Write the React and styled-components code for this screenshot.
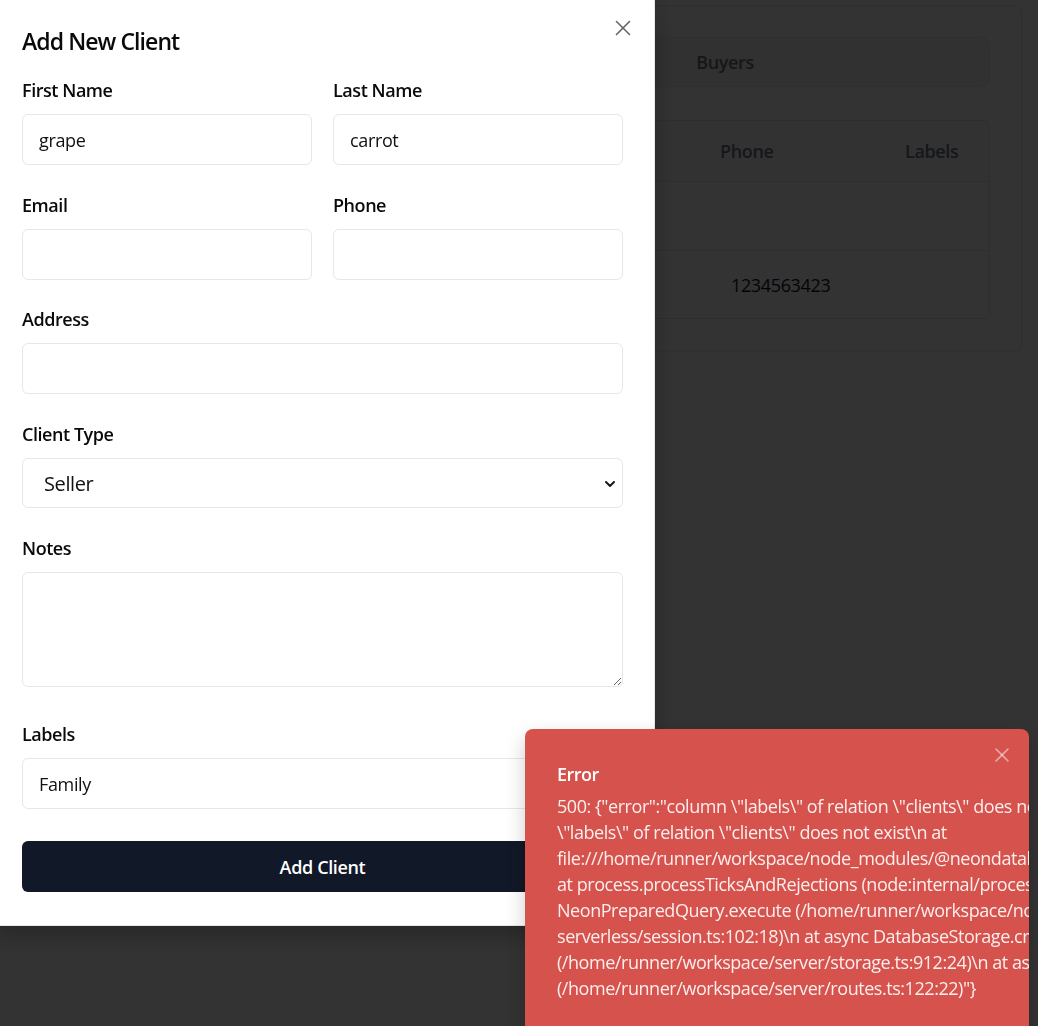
import React from 'react';
import styled, { createGlobalStyle } from 'styled-components';

const Global = createGlobalStyle`
  html, body { margin: 0; padding: 0; height: 100%; overflow: hidden; background: #ffffff; }
  body {
    font-family: "Open Sans", "Noto Sans", sans-serif;
    font-size: 18px;
    color: #0f0f0f;
    letter-spacing: -0.02em;
  }
  *, *::before, *::after { box-sizing: border-box; }
`;

/* ---------- background page ---------- */
const Page = styled.main`
  padding: 5px 16px 0 16px;
`;

const Card = styled.section`
  background: #ffffff;
  border: 1px solid #e5e7eb;
  border-radius: 8px;
  padding: 31px;
  display: flex;
  flex-direction: column;
  gap: 33px;
  box-shadow: 0 1px 3px rgba(0, 0, 0, 0.08);
`;

const TabList = styled.div`
  height: 50px;
  display: grid;
  grid-template-columns: 1fr 520px;
  background: #f4f4f5;
  border: 1px solid #ececee;
  border-radius: 8px;
  padding: 4px;
`;

const Tab = styled.div`
  display: flex;
  align-items: center;
  justify-content: center;
  border-radius: 6px;
  font-weight: 600;
  color: ${(p) => (p.$active ? '#111827' : '#6b7280')};
  background: ${(p) => (p.$active ? '#ffffff' : 'transparent')};
`;

const Table = styled.div`
  border: 1px solid #e5e7eb;
  border-radius: 6px;
  overflow: hidden;
`;

const Row = styled.div`
  display: grid;
  grid-template-columns: 1fr 1fr 185px 100px;
  align-items: center;
  height: ${(p) => p.$h}px;
  background: ${(p) => (p.$head ? '#f9fafb' : '#ffffff')};
  border-bottom: ${(p) => (p.$last ? 'none' : '1px solid #e5e7eb')};
`;

const HeadCell = styled.div`
  padding: 0 16px;
  font-weight: 600;
  color: #6b7280;
`;

const Cell = styled.div`
  padding: 0 27px;
  color: #111827;
  white-space: nowrap;
`;

const Overlay = styled.div`
  position: fixed;
  inset: 0;
  background: rgba(0, 0, 0, 0.8);
`;

/* ---------- dialog ---------- */
const Dialog = styled.div`
  position: fixed;
  left: -10px;
  top: -7px;
  width: 665px;
  background: #ffffff;
  border: 1px solid #e5e7eb;
  border-radius: 8px;
  padding: 31px 31px 33px 31px;
  box-shadow: 0 10px 25px rgba(0, 0, 0, 0.25);
`;

const Title = styled.h2`
  margin: 0;
  font-size: 23px;
  line-height: 32px;
  font-weight: 600;
  letter-spacing: -0.04em;
  color: #0a0a0a;
`;

const CloseButton = styled.button`
  position: absolute;
  right: 23px;
  top: 26px;
  width: 16px;
  height: 16px;
  padding: 0;
  border: none;
  background: transparent;
  display: flex;
  opacity: 0.75;
  color: #333;
`;

const Form = styled.form`
  margin-top: 20px;
  display: flex;
  flex-direction: column;
  gap: 27px;
`;

const TwoCols = styled.div`
  display: grid;
  grid-template-columns: 1fr 1fr;
  gap: 21px;
`;

const Field = styled.div`
  display: flex;
  flex-direction: column;
  gap: 10px;
  margin-top: ${(p) => p.$before || 0}px;
  margin-bottom: ${(p) => p.$after || 0}px;
`;

const Label = styled.label`
  font-size: 18px;
  line-height: 27px;
  font-weight: 600;
  letter-spacing: -0.025em;
  color: #0a0a0a;
`;

const Input = styled.input`
  height: 51px;
  width: 100%;
  border: 1px solid #e5e7eb;
  border-radius: 6px;
  padding: 0 16px;
  font: inherit;
  font-size: 18px;
  letter-spacing: -0.02em;
  color: #111111;
  background: #ffffff;
  outline: none;
`;

const SelectWrap = styled.div`
  position: relative;
`;

const Select = styled.select`
  appearance: none;
  -webkit-appearance: none;
  width: 100%;
  height: 50px;
  border: 1px solid #e5e7eb;
  border-radius: 6px;
  padding: 0 21px;
  font: inherit;
  font-size: 20px;
  letter-spacing: -0.02em;
  color: #111111;
  background: #ffffff;
  outline: none;
`;

const Chevron = styled.svg`
  position: absolute;
  right: 7px;
  top: 20px;
  pointer-events: none;
`;

const TextArea = styled.textarea`
  display: block;
  width: 100%;
  height: 115px;
  border: 1px solid #e5e7eb;
  border-radius: 6px;
  padding: 12px 16px;
  font: inherit;
  font-size: 18px;
  color: #111111;
  background: #ffffff;
  outline: none;
`;

const Submit = styled.button`
  margin-top: 5px;
  height: 51px;
  width: 100%;
  border: none;
  border-radius: 6px;
  background: #111827;
  color: #ffffff;
  font: inherit;
  font-size: 18px;
  font-weight: 600;
  letter-spacing: -0.02em;
`;

/* ---------- toast ---------- */
const Toast = styled.div`
  position: fixed;
  left: 525px;
  top: 729px;
  width: 504px;
  height: 320px;
  background: #d6524c;
  border-radius: 8px;
  padding: 32px 32px 0 32px;
  overflow: hidden;
  box-shadow: 0 8px 20px rgba(0, 0, 0, 0.2);
`;

const ToastTitle = styled.div`
  font-size: 18px;
  line-height: 26px;
  font-weight: 600;
  letter-spacing: -0.03em;
  color: #ffffff;
`;

const ToastBody = styled.div`
  margin-top: 6px;
  font-size: 18px;
  line-height: 26px;
  letter-spacing: -0.025em;
  color: rgba(255, 255, 255, 0.9);
`;

const ToastLine = styled.div`
  white-space: nowrap;
`;

const ToastClose = styled.button`
  position: absolute;
  right: 19px;
  top: 18px;
  width: 16px;
  height: 16px;
  padding: 0;
  border: none;
  background: transparent;
  display: flex;
  color: rgba(255, 255, 255, 0.5);
`;

const XIcon = ({ span = 13 }) => {
  const a = (16 - span) / 2;
  const b = 16 - a;
  return (
    <svg width="16" height="16" viewBox="0 0 16 16" fill="none" stroke="currentColor" strokeWidth="1.6" strokeLinecap="round">
      <path d={`M${b} ${a} L${a} ${b}`} />
      <path d={`M${a} ${a} L${b} ${b}`} />
    </svg>
  );
};

const errorLines = [
  '500: {"error":"column \\"labels\\" of relation \\"clients\\" does not exist","stack":"error: column',
  '\\"labels\\" of relation \\"clients\\" does not exist\\n at',
  'file:///home/runner/workspace/node_modules/@neondatabase/serverless/index.mjs:1345:74\\n',
  'at process.processTicksAndRejections (node:internal/process/task_queues:95:5)\\n at async',
  'NeonPreparedQuery.execute (/home/runner/workspace/node_modules/drizzle-orm/neon-',
  'serverless/session.ts:102:18)\\n at async DatabaseStorage.createClient',
  '(/home/runner/workspace/server/storage.ts:912:24)\\n at async',
  '(/home/runner/workspace/server/routes.ts:122:22)"}',
];

export default function App() {
  return (
    <>
      <Global />
      <Page>
        <Card>
          <TabList>
            <Tab $active>Sellers</Tab>
            <Tab>Buyers</Tab>
          </TabList>
          <Table>
            <Row $head $h={61}>
              <HeadCell>Name</HeadCell>
              <HeadCell>Email</HeadCell>
              <HeadCell>Phone</HeadCell>
              <HeadCell>Labels</HeadCell>
            </Row>
            <Row $h={69}>
              <Cell>apple banana</Cell>
              <Cell>apple@example.com</Cell>
              <Cell></Cell>
              <Cell></Cell>
            </Row>
            <Row $h={67} $last>
              <Cell>grape carrot</Cell>
              <Cell>grape@example.com</Cell>
              <Cell>1234563423</Cell>
              <Cell></Cell>
            </Row>
          </Table>
        </Card>
      </Page>

      <Overlay />

      <Dialog role="dialog">
        <Title>Add New Client</Title>
        <CloseButton aria-label="Close">
          <XIcon span={13} />
        </CloseButton>
        <Form onSubmit={(e) => e.preventDefault()}>
          <TwoCols>
            <Field>
              <Label>First Name</Label>
              <Input defaultValue="grape" />
            </Field>
            <Field>
              <Label>Last Name</Label>
              <Input defaultValue="carrot" />
            </Field>
          </TwoCols>
          <TwoCols>
            <Field>
              <Label>Email</Label>
              <Input />
            </Field>
            <Field>
              <Label>Phone</Label>
              <Input />
            </Field>
          </TwoCols>
          <Field $before={-1}>
            <Label>Address</Label>
            <Input />
          </Field>
          <Field>
            <Label>Client Type</Label>
            <SelectWrap>
              <Select defaultValue="Seller">
                <option>Seller</option>
                <option>Buyer</option>
              </Select>
              <Chevron width="12" height="12" viewBox="0 0 12 12" fill="none" stroke="#1a1a1a" strokeWidth="2" strokeLinecap="round" strokeLinejoin="round">
                <polyline points="2,4 6,8 10,4" />
              </Chevron>
            </SelectWrap>
          </Field>
          <Field $after={7}>
            <Label>Notes</Label>
            <TextArea />
          </Field>
          <Field>
            <Label>Labels</Label>
            <Input defaultValue="Family" />
          </Field>
          <Submit type="submit">Add Client</Submit>
        </Form>
      </Dialog>

      <Toast role="alert">
        <ToastClose aria-label="Dismiss">
          <XIcon span={12} />
        </ToastClose>
        <ToastTitle>Error</ToastTitle>
        <ToastBody>
          {errorLines.map((l, i) => (
            <ToastLine key={i}>{l}</ToastLine>
          ))}
        </ToastBody>
      </Toast>
    </>
  );
}
